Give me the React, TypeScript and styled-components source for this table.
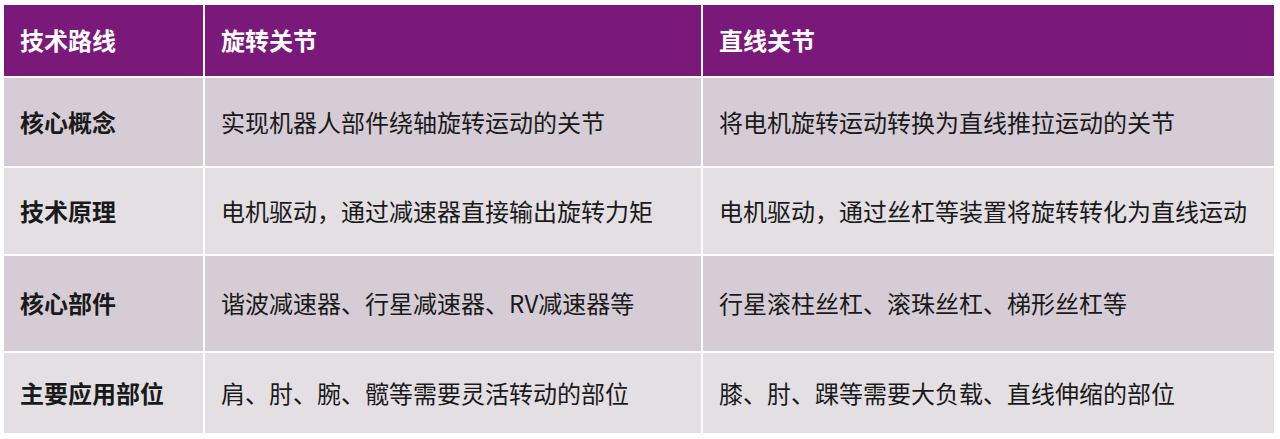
import React from "react";
import styled, { createGlobalStyle } from "styled-components";

const GlobalStyle = createGlobalStyle`
  html, body {
    margin: 0;
    padding: 0;
    background: #ffffff;
  }
  body {
    font-family: "Noto Sans CJK SC", "Noto Sans", sans-serif;
  }
`;

const Page = styled.div`
  padding: 5px 6px 6px 4px;
`;

const Table = styled.div<{ rows: string }>`
  display: grid;
  grid-template-columns: 199px 496px 1fr;
  grid-template-rows: ${(p) => p.rows};
  gap: 2px;
  background: #ffffff;
`;

const HeadCell = styled.div`
  display: flex;
  align-items: center;
  padding: 0 16px 2px;
  background-color: #7a1979;
  color: #ffffff;
  font-size: 24px;
  font-weight: 700;
`;

const Cell = styled.div<{ shade: boolean; strong?: boolean }>`
  display: flex;
  align-items: center;
  padding: 0 16px 2px;
  background-color: ${(p) => (p.shade ? "#d6ccd6" : "#e3dfe3")};
  color: #1a1a1a;
  font-size: 24px;
  font-weight: ${(p) => (p.strong ? 700 : 400)};
  white-space: nowrap;
`;

type Row = {
  label: string;
  rotary: string;
  linear: string;
};

const header = ["技术路线", "旋转关节", "直线关节"];

const rows: Row[] = [
  {
    label: "核心概念",
    rotary: "实现机器人部件绕轴旋转运动的关节",
    linear: "将电机旋转运动转换为直线推拉运动的关节",
  },
  {
    label: "技术原理",
    rotary: "电机驱动，通过减速器直接输出旋转力矩",
    linear: "电机驱动，通过丝杠等装置将旋转转化为直线运动",
  },
  {
    label: "核心部件",
    rotary: "谐波减速器、行星减速器、RV减速器等",
    linear: "行星滚柱丝杠、滚珠丝杠、梯形丝杠等",
  },
  {
    label: "主要应用部位",
    rotary: "肩、肘、腕、髋等需要灵活转动的部位",
    linear: "膝、肘、踝等需要大负载、直线伸缩的部位",
  },
];

export default function App() {
  return (
    <>
      <GlobalStyle />
      <Page>
        <Table rows="71px 88px 86px 95px 80px">
          {header.map((h) => (
            <HeadCell key={h}>{h}</HeadCell>
          ))}
          {rows.map((r, i) => (
            <React.Fragment key={r.label}>
              <Cell shade={i % 2 === 0} strong>
                {r.label}
              </Cell>
              <Cell shade={i % 2 === 0}>{r.rotary}</Cell>
              <Cell shade={i % 2 === 0}>{r.linear}</Cell>
            </React.Fragment>
          ))}
        </Table>
      </Page>
    </>
  );
}
